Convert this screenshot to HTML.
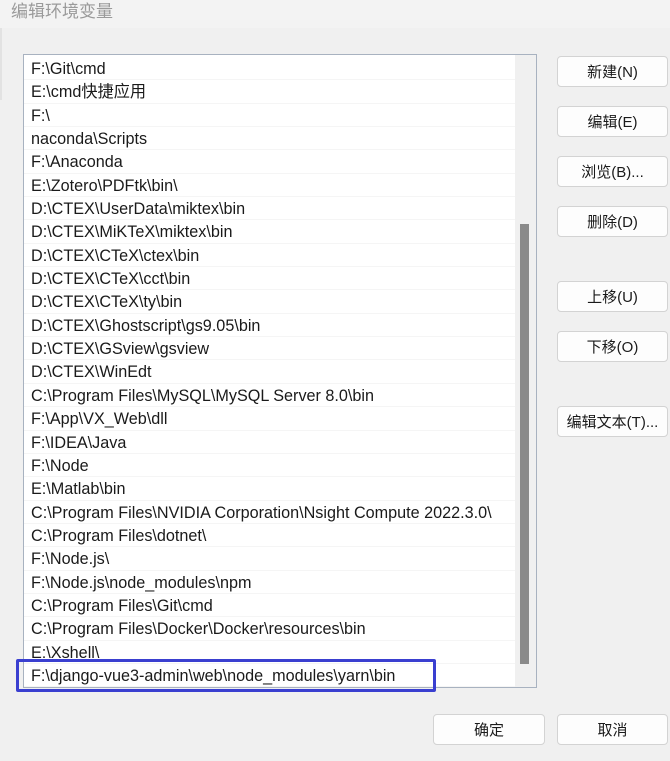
<!DOCTYPE html>
<html><head><meta charset="utf-8"><style>
body{margin:0;width:670px;height:761px;background:#f0f0f0;position:relative;overflow:hidden;font-family:"Liberation Sans","Noto Sans CJK SC",sans-serif;color:#1a1a1a}
.title{position:absolute;left:0;top:0;width:670px;height:28px;background:#f3f3f3;font-size:17px;color:#9a9a9a;line-height:24px;padding-left:11px;box-sizing:border-box}
.edge{position:absolute;left:0;top:28px;width:2px;height:72px;background:#e2e2e2}
.list{position:absolute;left:23px;top:54px;width:512px;height:632px;background:#fff;border:1px solid #a8b2c0;overflow:hidden}
.row{height:23.35px;line-height:24px;font-size:16.2px;padding-left:7px;border-bottom:1px solid #f5f5f5;box-sizing:border-box;width:491px;white-space:nowrap;overflow:hidden}
.sb{position:absolute;right:0;top:0;width:21px;height:100%;background:#f0f0f0}
.thumb{position:absolute;left:5px;top:169px;width:9px;height:440px;background:#8a8a8a}
.btn{position:absolute;width:111px;height:31px;background:#fdfdfd;border:1px solid #d3d3d3;border-radius:4px;box-sizing:border-box;text-align:center;line-height:32px;font-size:15px}
.hl{position:absolute;left:16px;top:659px;width:420px;height:33px;border:3px solid #3a3fd0;box-sizing:border-box;border-radius:2px}
</style></head><body>
<div class="title">编辑环境变量</div>
<div class="edge"></div>
<div class="list">
<div style="height:2px"></div>
<div class="row">F:\Git\cmd</div>
<div class="row">E:\cmd快捷应用</div>
<div class="row">F:\</div>
<div class="row">naconda\Scripts</div>
<div class="row">F:\Anaconda</div>
<div class="row">E:\Zotero\PDFtk\bin\</div>
<div class="row">D:\CTEX\UserData\miktex\bin</div>
<div class="row">D:\CTEX\MiKTeX\miktex\bin</div>
<div class="row">D:\CTEX\CTeX\ctex\bin</div>
<div class="row">D:\CTEX\CTeX\cct\bin</div>
<div class="row">D:\CTEX\CTeX\ty\bin</div>
<div class="row">D:\CTEX\Ghostscript\gs9.05\bin</div>
<div class="row">D:\CTEX\GSview\gsview</div>
<div class="row">D:\CTEX\WinEdt</div>
<div class="row">C:\Program Files\MySQL\MySQL Server 8.0\bin</div>
<div class="row">F:\App\VX_Web\dll</div>
<div class="row">F:\IDEA\Java</div>
<div class="row">F:\Node</div>
<div class="row">E:\Matlab\bin</div>
<div class="row">C:\Program Files\NVIDIA Corporation\Nsight Compute 2022.3.0\</div>
<div class="row">C:\Program Files\dotnet\</div>
<div class="row">F:\Node.js\</div>
<div class="row">F:\Node.js\node_modules\npm</div>
<div class="row">C:\Program Files\Git\cmd</div>
<div class="row">C:\Program Files\Docker\Docker\resources\bin</div>
<div class="row">E:\Xshell\</div>
<div class="row">F:\django-vue3-admin\web\node_modules\yarn\bin</div>
<div class="sb"><div class="thumb"></div></div>
</div>
<div class="hl"></div>
<div class="btn" style="left:557px;top:56px">新建(N)</div>
<div class="btn" style="left:557px;top:106px">编辑(E)</div>
<div class="btn" style="left:557px;top:156px">浏览(B)...</div>
<div class="btn" style="left:557px;top:206px">删除(D)</div>
<div class="btn" style="left:557px;top:281px">上移(U)</div>
<div class="btn" style="left:557px;top:331px">下移(O)</div>
<div class="btn" style="left:557px;top:406px">编辑文本(T)...</div>
<div class="btn" style="left:433px;top:714px;width:112px">确定</div>
<div class="btn" style="left:557px;top:714px">取消</div>
</body></html>
